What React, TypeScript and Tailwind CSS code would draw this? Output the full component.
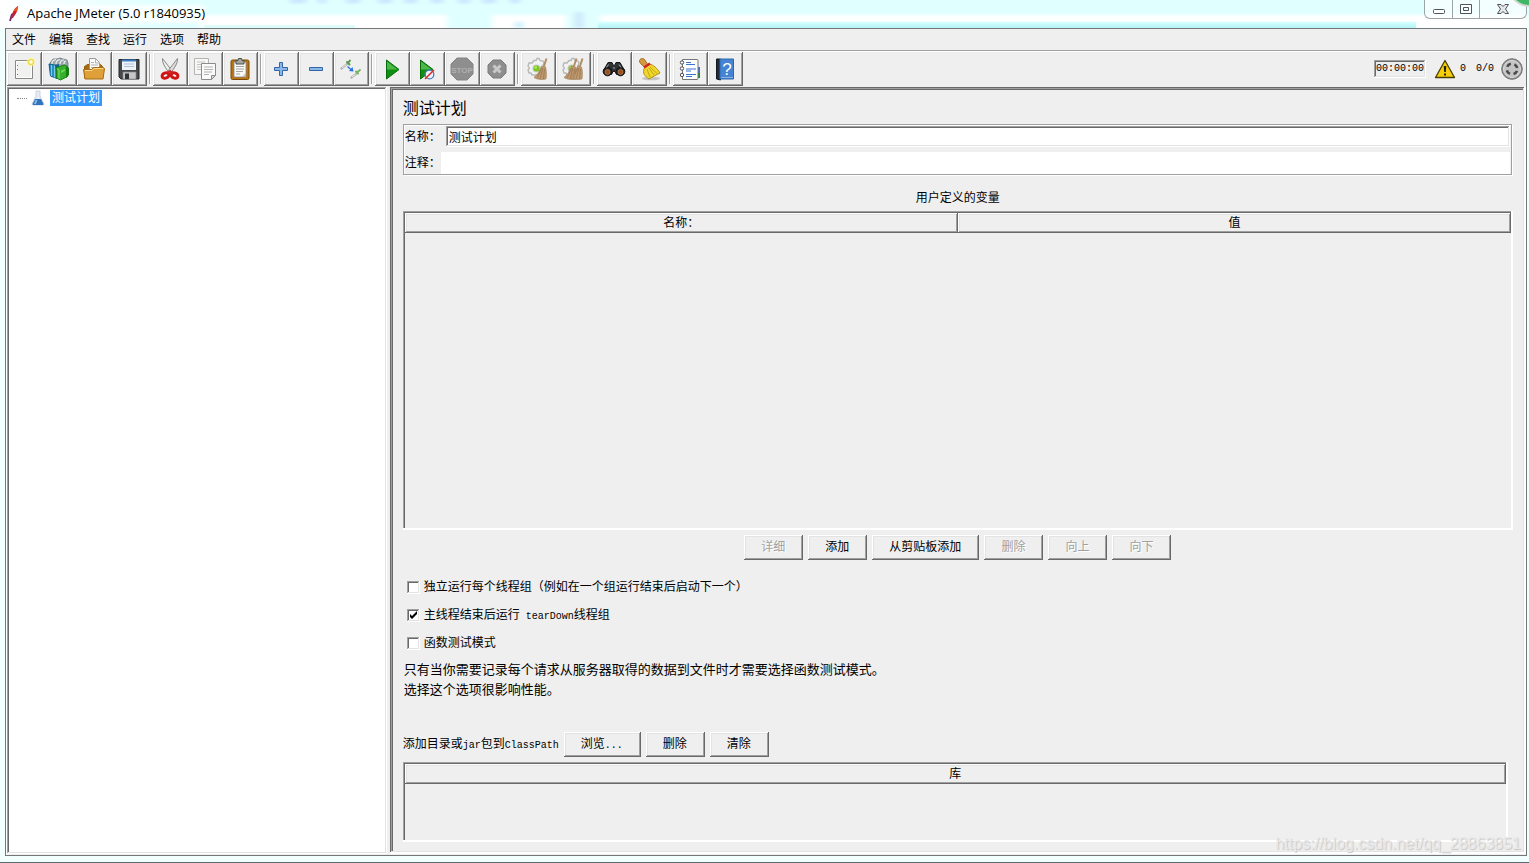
import React, { useState } from "react";

const RAISED =
  "shadow-[inset_-1px_-1px_0_#696969,inset_1px_1px_0_#ffffff,inset_-2px_-2px_0_#a0a0a0,inset_2px_2px_0_#e3e3e3]";
const SUNKEN =
  "shadow-[inset_-1px_-1px_0_#ffffff,inset_1px_1px_0_#a0a0a0,inset_-2px_-2px_0_#e3e3e3,inset_2px_2px_0_#696969]";
const WELL = "shadow-[inset_-2px_-2px_0_#ffffff,inset_1px_1px_0_#a0a0a0,inset_2px_2px_0_#696969]";
const PANE =
  "shadow-[inset_-2px_-2px_0_#ffffff,inset_1px_1px_0_#696969,inset_-3px_-3px_0_#e3e3e3,inset_2px_2px_0_#a0a0a0,inset_3px_3px_0_#696969]";
const MONO = "font-['Liberation_Mono','Noto_Sans_CJK_SC',monospace] text-[10px]";

function Svg({ children, size = 24 }: { children: React.ReactNode; size?: number }) {
  return (
    <svg width={size} height={size} viewBox="0 0 24 24" fill="none" aria-hidden="true">
      {children}
    </svg>
  );
}

const NewIcon = () => (
  <Svg>
    <path d="M3.5 3.5h17v18h-17z" fill="#f1f1ef" stroke="#888a85" />
    <path d="M4.500 4.500h15v16h-15z" stroke="#fff" />
    <path d="M5.500 8v1M5.500 12v1M5.500 17v1" stroke="#777" />
    <circle cx="19" cy="5" r="4.500" fill="#fdf6a0" opacity=".6" />
    <circle cx="19" cy="5" r="2.500" fill="#fffef0" stroke="#f0dc50" strokeWidth="1.500" />
  </Svg>
);

const TemplatesIcon = () => (
  <Svg>
    <path d="M3 6l3-4 4 0 3-1 3 1 4 1 1 3v5H3z" fill="#9aa5aa" stroke="#6d7a80" strokeWidth=".8" />
    <path d="M5 7q0-4 4-4.500M9 7q0-4 4-4.500M13 7q0-4 4-4M17 7q0-3 2-3" stroke="#eef2f3" strokeWidth="1.200" />
    <path d="M2 7l8 1.500v13L3.500 19z" fill="#1b86bf" stroke="#0b6090" />
    <path d="M4.500 8v11M7.500 8.500v12" stroke="#7cc6e6" strokeWidth="1.300" />
    <path d="M8 8l4-1v13l-2 2z" fill="#0f5f92" />
    <path d="M9.500 10.500l8-2.500 3 1.500v10l-7 3.500-4-2z" fill="#35b02c" stroke="#198215" />
    <path d="M19 9l3 2v7l-3 3z" fill="#14800f" />
    <path d="M10 11.500l2 1.500v8.500" stroke="#8be078" />
    <path d="M14 13.500l4-1.500v2l-4 2z" fill="#6ad655" />
  </Svg>
);

const OpenIcon = () => (
  <Svg>
    <path d="M2.500 9.500l3-2h13l2 2V21h-18z" fill="#a66a12" stroke="#8f5902" />
    <path d="M7.500 1.500h6l4 4v8h-10z" fill="#fafafa" stroke="#999" />
    <path d="M13.500 2v4h4M9 5.500h3M9 8h7M9 10.500h7" stroke="#aaa" strokeWidth=".9" />
    <path d="M1.500 12.500h8l2-2h10l1 1-1.500 10.500H3z" fill="#dfa03a" stroke="#a86a10" />
    <path d="M3 13.500h7l2-2h9" stroke="#fbd88c" />
  </Svg>
);

const SaveIcon = () => (
  <Svg>
    <path d="M2 2.500h20v19.500H4l-2-2z" fill="#45484a" stroke="#26292a" />
    <path d="M5 3h14v10H5z" fill="#eef3f9" />
    <path d="M5 2.500h14v2H5z" fill="#3e7cc4" />
    <path d="M7 7h10M7 9.500h10" stroke="#a9bfd7" />
    <path d="M6 15h13v7H6z" fill="#c6c8c7" stroke="#85898a" strokeWidth=".7" />
    <path d="M8 16.500h4V22H8z" fill="#303436" />
  </Svg>
);

const CutIcon = () => (
  <Svg>
    <path d="M4.500 1.500L14.500 14.500l-2.500 2C8 12 4 6 4.500 1.500z" fill="#f0f0ee" stroke="#888" />
    <path d="M19.500 1.500L9.500 14.500l2.500 2C16 12 20 6 19.500 1.500z" fill="#dcdcda" stroke="#888" />
    <ellipse cx="7.500" cy="18.500" rx="3.500" ry="2.600" stroke="#cf1212" strokeWidth="3" transform="rotate(-20 7.500 18.500)" />
    <ellipse cx="16.500" cy="18.500" rx="3.500" ry="2.600" stroke="#cf1212" strokeWidth="3" transform="rotate(20 16.500 18.500)" />
    <path d="M9.500 16l2.500-2 2.500 2" stroke="#d81c1c" strokeWidth="2" />
  </Svg>
);

const CopyIcon = () => (
  <Svg>
    <path d="M1.500 1.500h14v16h-14z" fill="#f7f7f6" stroke="#b4b5b2" />
    <path d="M4 5h8M4 7.500h4M4 10h4M4 12.500h4" stroke="#c3c4c1" />
    <path d="M8.500 6.500h14v12l-4 4h-10z" fill="#fafafa" stroke="#8b8d89" />
    <path d="M11 10h9M11 12.500h9M11 15h8M11 17.500h5" stroke="#b2b3b0" />
    <path d="M18.500 22.500v-4h4z" fill="#d4d5d2" stroke="#8b8d89" />
  </Svg>
);

const PasteIcon = () => (
  <Svg>
    <rect x="3" y="3" width="18" height="19.500" rx="1.500" fill="#b87414" stroke="#7a4a05" />
    <path d="M6 5h12v15H6z" fill="#f9f9f8" stroke="#87888a" strokeWidth=".8" />
    <path d="M8 9.500h8M8 12h8M8 14.500h7M8 17h4" stroke="#a3a5a2" />
    <path d="M8 3.500h2l.500-2h3l.500 2h2V7H8z" fill="#a4a69f" stroke="#4d504b" />
    <path d="M14 20l4-4v4z" fill="#b9bab7" />
  </Svg>
);

const PlusIcon = () => (
  <Svg>
    <path d="M10.500 5.500h3v5h5v3h-5v5h-3v-5h-5v-3h5z" fill="#8ab6e8" stroke="#3465a4" />
  </Svg>
);

const MinusIcon = () => (
  <Svg>
    <path d="M5.500 10.500h13v3h-13z" fill="#8ab6e8" stroke="#3465a4" />
  </Svg>
);

const ToggleIcon = () => (
  <Svg>
    <path d="M2.500 11.500L8 7" stroke="#a7aea4" strokeWidth="2.200" strokeLinecap="round" />
    <path d="M3 11l4.500-3.700" stroke="#f4f8f2" strokeWidth=".9" />
    <path d="M8 5l2.500 2.500M9 6l2-2.500" stroke="#5b9a50" strokeWidth="2" strokeLinecap="round" />
    <path d="M12.500 20.500l4.500-3.500" stroke="#a7aea4" strokeWidth="2.200" strokeLinecap="round" />
    <path d="M13 20l3.500-2.700" stroke="#f4f8f2" strokeWidth=".9" />
    <path d="M17 14.500l2 2M18.500 15l2.500-2" stroke="#7cb268" strokeWidth="2" strokeLinecap="round" />
    <path d="M8.500 9.500l4 3.500" stroke="#2472e8" strokeWidth="1.300" />
    <path d="M14.500 14.500l-4.500-.5 3.500-4z" fill="#2472e8" />
  </Svg>
);

const PlayIcon = () => (
  <Svg>
    <path d="M6.500 3l12.500 9.500L6.500 22z" fill="#0f8f10" stroke="#0a6b0a" />
    <path d="M7 4.500L17.500 12.500H7z" fill="#4cb848" />
  </Svg>
);

const PlayNoTimersIcon = () => (
  <Svg>
    <path d="M5.500 3L18 12.500 5.500 22z" fill="#0f8f10" stroke="#0a6b0a" />
    <path d="M6 4.500L16.500 12.500H6z" fill="#4cb848" />
    <circle cx="14.500" cy="17.500" r="4.300" fill="#eef3fb" stroke="#477cc0" strokeWidth="1.300" />
    <path d="M10 22l9-9" stroke="#e32020" strokeWidth="1.500" />
  </Svg>
);

const StopIcon = () => (
  <Svg>
    <path d="M7 1h10l6 6v10l-6 6H7l-6-6V7z" fill="#8e8e8e" stroke="#848484" />
    <text x="12" y="15.500" textAnchor="middle" fontSize="8" fontWeight="700" fill="#b0b0b0" fontFamily="Liberation Sans, sans-serif">
      STOP
    </text>
  </Svg>
);

const ShutdownIcon = () => (
  <Svg>
    <path d="M8 3h8l5 5v8l-5 5H8l-5-5V8z" fill="#8e8e8e" stroke="#7b7b7b" />
    <path d="M8.500 8.500l7 7M15.500 8.500l-7 7" stroke="#c9c9c9" strokeWidth="3" />
  </Svg>
);

const Broom = ({ x = 0 }: { x?: number }) => (
  <g transform={`translate(${x} 0)`}>
    <path d="M20.500 1.500L18 9" stroke="#b18d66" strokeWidth="2" />
    <path d="M15.500 9l4 1c1 4 1 8 .5 12-4 .8-9 .5-12-1.500 4-3 6-7 7.500-11.500z" fill="#c09a70" stroke="#a07c55" strokeWidth=".7" />
    <path d="M16 11l-5 10M17 11l-3 11M18.500 12l-1 10" stroke="#94704a" strokeWidth=".7" />
  </g>
);

const Gear = () => (
  <>
    <path
      d="M8 3.500l2 0 1-2h2l1 2 3 .5 1 2-1 2 2 2v5l-2 1-1 2H6l-1-2-2 0-1-3 1.500-1.500L2 9l1-3h3z"
      fill="#f2f2f2"
      stroke="#b5b7b5"
      strokeWidth="1.300"
    />
    <circle cx="10.500" cy="11.500" r="4" fill="#c9c9c9" />
    <circle cx="10.500" cy="11.500" r="3" fill="#7cc81e" />
    <circle cx="9.800" cy="10.500" r="1.200" fill="#b4e86e" />
  </>
);

const ClearIcon = () => (
  <Svg>
    <Gear />
    <Broom />
  </Svg>
);

const ClearAllIcon = () => (
  <Svg>
    <Gear />
    <Broom x={-5} />
    <Broom x={1} />
  </Svg>
);

const SearchIcon = () => (
  <Svg>
    <path d="M6 5.500h4l1.500 3h1l1.500-3h4l4.500 8-3 4h-5l-1.500-3h-2l-1.500 3h-5l-3-4z" fill="#303435" stroke="#151717" />
    <circle cx="5.500" cy="14.500" r="4.300" fill="#252525" stroke="#111" />
    <circle cx="18.500" cy="14.500" r="4.300" fill="#252525" stroke="#111" />
    <circle cx="5.500" cy="15" r="2.500" fill="#9c4f1d" stroke="#c98b62" strokeWidth=".6" />
    <circle cx="18.500" cy="15" r="2.500" fill="#9c4f1d" stroke="#c98b62" strokeWidth=".6" />
    <path d="M6.500 7.500l-2 3M17 7.500l2 3M11 11h2" stroke="#a3a7a7" />
  </Svg>
);

const SweepIcon = () => (
  <Svg>
    <ellipse cx="14" cy="21.500" rx="9" ry="1.800" fill="#999" opacity=".5" />
    <path d="M2.500 4c0-2 3-3.500 5-1.500L11 8l-3 2.500-4-3.500c-1-1-1.500-2-1.500-3z" fill="#d59a41" stroke="#8f5902" strokeWidth=".8" />
    <path d="M7.500 10.500L12.500 7c4 1 7.500 4 10.500 9-3 1.500-7 3.500-11 6C8 19 5 17 7.500 10.500z" fill="#f0d72c" stroke="#a98708" strokeWidth=".9" />
    <path d="M10 12l3 8M12 11l5 7M13 10l7 6.500" stroke="#b89a13" strokeWidth=".8" />
    <path d="M7 10.500l6-4" stroke="#d42020" strokeWidth="2.500" />
  </Svg>
);

const FunctionsIcon = () => (
  <Svg>
    <path d="M19 10h3v6h-3z" fill="#2d78df" />
    <path d="M19 16h3v5h-3z" fill="#159415" />
    <path d="M4.500 2.500h14.500a1 1 0 011 1v18a1 1 0 01-1 1H4.500z" fill="#fff" stroke="#777" />
    <path d="M8 5.500h5M8 7.500h9M8 12h10M8 14h5M8 17.500h10M8 19.500h6" stroke="#3a76cc" strokeWidth="1.200" />
    <g stroke="#4e4e4e" fill="#fff">
      <circle cx="4" cy="5.500" r="1.700" />
      <circle cx="4" cy="11.500" r="1.700" />
      <circle cx="4" cy="18" r="1.700" />
    </g>
  </Svg>
);

const HelpIcon = () => (
  <Svg>
    <path d="M3.500 2h4v21l-4-1z" fill="#222c38" stroke="#101820" />
    <path d="M7 2h13.500v20H7z" fill="#4484d2" stroke="#2f66ad" />
    <path d="M8 20.500h12" stroke="#8bb4e6" />
    <text x="14" y="17.500" textAnchor="middle" fontSize="17" fill="#fff" fontFamily="Liberation Sans, sans-serif">
      ?
    </text>
  </Svg>
);

type Tool = { label: string; Icon: () => React.ReactElement; disabled?: boolean };

const TOOL_GROUPS: Tool[][] = [
  [
    { label: "新建", Icon: NewIcon },
    { label: "模板", Icon: TemplatesIcon },
    { label: "打开", Icon: OpenIcon },
    { label: "保存", Icon: SaveIcon },
  ],
  [
    { label: "剪切", Icon: CutIcon },
    { label: "复制", Icon: CopyIcon },
    { label: "粘贴", Icon: PasteIcon },
  ],
  [
    { label: "展开", Icon: PlusIcon },
    { label: "收起", Icon: MinusIcon },
    { label: "切换", Icon: ToggleIcon },
  ],
  [
    { label: "启动", Icon: PlayIcon },
    { label: "不停顿启动", Icon: PlayNoTimersIcon },
    { label: "停止", Icon: StopIcon, disabled: true },
    { label: "关闭", Icon: ShutdownIcon, disabled: true },
  ],
  [
    { label: "清除", Icon: ClearIcon },
    { label: "清除全部", Icon: ClearAllIcon },
  ],
  [
    { label: "搜索", Icon: SearchIcon },
    { label: "重置搜索", Icon: SweepIcon },
  ],
  [
    { label: "函数助手", Icon: FunctionsIcon },
    { label: "帮助", Icon: HelpIcon },
  ],
];

function PushButton({ children, disabled }: { children: React.ReactNode; disabled?: boolean }) {
  return (
    <button
      type="button"
      disabled={disabled}
      className={`h-[25px] pr-[18px] pl-[17px] leading-[25px] whitespace-nowrap disabled:text-[#a0a0a0] disabled:[text-shadow:1px_1px_0_#fff] ${RAISED}`}
    >
      {children}
    </button>
  );
}

function CheckRow({ children, initial = false }: { children: React.ReactNode; initial?: boolean }) {
  const [on, setOn] = useState(initial);
  return (
    <label className="flex h-7 items-center gap-1">
      <span className="relative block size-[13px]">
        <input
          type="checkbox"
          checked={on}
          onChange={(e) => setOn(e.target.checked)}
          className={`peer block size-[13px] appearance-none bg-white ${SUNKEN}`}
        />
        <svg
          className="pointer-events-none absolute inset-0 hidden peer-checked:block"
          width="13"
          height="13"
          viewBox="0 0 13 13"
          fill="none"
          aria-hidden="true"
        >
          <path d="M3 5v3l2 2 5-5V2L5 7z" fill="#000" />
        </svg>
      </span>
      <span>{children}</span>
    </label>
  );
}

function HeaderTable({ columns, className }: { columns: string[]; className: string }) {
  return (
    <div className={`p-0.5 ${WELL} ${className}`}>
      <table className="w-full table-fixed border-collapse">
        <thead>
          <tr>
            {columns.map((c) => (
              <th key={c} scope="col" className={`h-5 p-0 text-center font-normal ${RAISED}`}>
                {c}
              </th>
            ))}
          </tr>
        </thead>
        <tbody />
      </table>
    </div>
  );
}

function TitleBar() {
  return (
    <header className="relative flex h-7 items-center">
      <svg className="absolute inset-0 size-full" viewBox="0 0 1529 28" preserveAspectRatio="none" aria-hidden="true">
        <defs>
          <filter id="soft" x="-10%" y="-50%" width="120%" height="200%">
            <feGaussianBlur stdDeviation="3 1.500" />
          </filter>
          <linearGradient id="teal" x1="0" y1="0" x2="0" y2="1">
            <stop offset="0" stopColor="#d8ffff" />
            <stop offset="1" stopColor="#b4f3f6" />
          </linearGradient>
          <linearGradient id="edge" x1="0" y1="0" x2="1" y2="0">
            <stop offset="0" stopColor="#ffffff" />
            <stop offset="1" stopColor="#ffffff" stopOpacity="0" />
          </linearGradient>
        </defs>
        <rect width="1529" height="28" fill="#e0ffff" />
        <g filter="url(#soft)">
          <rect x="20" y="5" width="184" height="18" fill="#fff" opacity=".8" />
          <rect x="200" y="15" width="247" height="16" fill="#fff" />
          <rect x="492" y="15" width="74" height="16" fill="#fff" />
          <rect x="600" y="15" width="929" height="7" fill="#fff" />
          <rect x="1415" y="17" width="114" height="12" fill="#fff" />
          <path
            d="M290 1h16M318 1h8M346 1h14M378 1h14M404 1h13M431 1h12M458 1h12M482 1h14M510 1h10"
            stroke="#c8e2ff"
            strokeWidth="4"
          />
          <rect x="515" y="22" width="8" height="6" fill="#c8f0fb" />
          <rect x="575" y="12" width="8" height="16" fill="#cde6fb" />
        </g>
        <rect x="598" y="22" width="818" height="6" fill="url(#teal)" />
        <rect x="204" y="25" width="151" height="3" fill="#ddfcfa" />
        <rect width="160" height="28" fill="url(#edge)" />
      </svg>
      <div className="relative flex items-center gap-1.5 pl-1.5 font-['Open_Sans','Noto_Sans',sans-serif] text-[13px]">
        <svg width="15" height="20" viewBox="0 0 15 20" aria-hidden="true">
          <path d="M12 2c-2 1-5 4-6 9l-1 3 2-1c3-2 5-7 5-11z" fill="#d22128" />
          <path d="M6 10l-2 7" stroke="#6d2a6e" strokeWidth="1.800" />
          <path d="M6 9l-2 6 3-1 2-4z" fill="#a52a50" />
          <path d="M12 2c-2 1-3 3-4 5l3 0c1-2 1-4 1-5z" fill="#ea5a25" />
        </svg>
        <h1>Apache JMeter (5.0 r1840935)</h1>
      </div>
      <div className="relative mr-0.5 ml-auto flex h-[19px] self-start overflow-hidden rounded-b-md border border-t-0 border-[#9aa5a8] bg-white/60">
        <button type="button" aria-label="最小化" className="grid w-7 place-items-center border-r border-[#9aa5a8]">
          <svg width="14" height="18" viewBox="0 0 14 18" aria-hidden="true">
            <rect x="1.500" y="9.500" width="11" height="4" rx="1" fill="#fff" stroke="#4d5560" />
          </svg>
        </button>
        <button type="button" aria-label="最大化" className="grid w-[27px] place-items-center border-r border-[#9aa5a8]">
          <svg width="14" height="18" viewBox="0 0 14 18" aria-hidden="true">
            <path d="M1.500 4.500h11v9h-11zM4.500 7.500v3h5v-3z" fill="#fff" fillRule="evenodd" stroke="#4d5560" />
          </svg>
        </button>
        <button type="button" aria-label="关闭窗口" className="grid w-[46px] place-items-center">
          <svg width="14" height="18" viewBox="0 0 14 18" aria-hidden="true">
            <path d="M1.500 4.500H5l2 2 2-2h3.500L9.500 9l3 4.500H9l-2-2-2 2H1.500l3-4.500z" fill="#e4e6e8" stroke="#4d5560" />
          </svg>
        </button>
      </div>
      <svg className="absolute top-0 right-0" width="20" height="8" viewBox="0 0 20 8" aria-hidden="true">
        <circle cx="20" cy="-14" r="21" fill="#cfd8d3" />
        <circle cx="20" cy="-14" r="19" fill="#3cb864" />
      </svg>
    </header>
  );
}

function Toolbar() {
  return (
    <div className="flex h-9 items-center border-t border-white pr-[3px] pb-px pl-px">
      {TOOL_GROUPS.map((group, i) => (
        <React.Fragment key={i}>
          {i > 0 && <span className="mx-0.5 h-[30px] w-0.5 border-r border-l border-r-white border-l-[#a0a0a0]" />}
          {group.map(({ label, Icon, disabled }) => (
            <button
              key={label}
              type="button"
              aria-label={label}
              disabled={disabled}
              className={`grid h-[34px] w-[35px] shrink-0 place-items-center pr-px ${RAISED}`}
            >
              <Icon />
            </button>
          ))}
        </React.Fragment>
      ))}
      <div className={`ml-auto flex items-center whitespace-nowrap ${MONO}`}>
        <output className={`px-0.5 leading-[18px] ${SUNKEN}`}>00:00:00</output>
        <svg className="mr-1 ml-2" width="22" height="20" viewBox="0 0 22 20" aria-hidden="true">
          <path d="M11 1.500l9.500 17h-19z" fill="#f7cf08" stroke="#4a3f00" strokeWidth="1.300" strokeLinejoin="round" />
          <path d="M9.700 7h2.600l-.500 6h-1.600zM10 14.500h2v2h-2z" fill="#222" />
        </svg>
        <span>0</span>
        <span className="ml-2.5">0/0</span>
        <svg className="ml-[7px]" width="22" height="22" viewBox="0 0 22 22" fill="none" aria-hidden="true">
          <circle cx="11" cy="11" r="10.300" fill="#8e8e8e" stroke="#747474" />
          <circle cx="11" cy="11" r="8.500" fill="#c4c4c4" stroke="#dedede" />
          <circle cx="11" cy="11" r="5.300" stroke="#4a4a4a" strokeWidth="2.600" strokeDasharray="4.600 3.725" strokeDashoffset="-1.900" />
        </svg>
      </div>
    </div>
  );
}

export default function App() {
  const [name, setName] = useState("测试计划");
  const [comment, setComment] = useState("");
  return (
    <div className="relative flex min-h-screen flex-col border-b border-[#5a6a72] bg-[#f2ffff] font-['Liberation_Sans','Noto_Sans_CJK_SC',sans-serif] text-xs text-black">
      <TitleBar />
      <div className="mr-0.5 mb-1.5 ml-[5px] flex flex-1 flex-col border border-[#747779] bg-[#efefef]">
        <nav className="flex h-[22px] items-center gap-[13px] border-b border-[#a0a0a0] pl-1.5">
          {["文件", "编辑", "查找", "运行", "选项", "帮助"].map((m) => (
            <button key={m} type="button">
              {m}
            </button>
          ))}
        </nav>
        <Toolbar />
        <div className="flex flex-1 gap-[3px] border-l border-white pb-px">
          <aside className={`w-1/4 bg-white p-[3px] ${SUNKEN}`}>
            <ul className="pl-[7px]">
              <li className="flex h-4 items-center">
                <span className="w-2.5 border-t border-dotted border-[#888]" />
                <svg className="mx-1 shrink-0" width="14" height="16" viewBox="0 0 14 16" aria-hidden="true">
                  <path d="M5 1h4v5l4 8q0 1-1 1H2q-1 0-1-1l4-8z" fill="#e7edf5" stroke="#c1cad4" strokeWidth=".8" />
                  <path d="M4 9h6l2.500 5q0 1-1 1h-9q-1 0-1-1z" fill="#2f74bd" />
                  <path d="M4.500 10h2L5 14H3z" fill="#86b8e8" />
                </svg>
                <span className="ml-px bg-[#3399ff] px-0.5 leading-4 text-white">测试计划</span>
              </li>
            </ul>
          </aside>
          <main className={`flex min-w-0 flex-1 flex-col px-[13px] pt-2.5 pb-3 ${PANE}`}>
            <h2 className="text-base leading-6">测试计划</h2>
            <div className="mt-[3px] mr-px flex flex-col gap-[5px] border border-[#a0a0a0] px-px pt-px shadow-[1px_1px_0_#fff,inset_1px_1px_0_#fff]">
              <div className="flex items-center">
                <label htmlFor="plan-name" className="w-[41px] shrink-0">
                  名称：
                </label>
                <input
                  id="plan-name"
                  value={name}
                  onChange={(e) => setName(e.target.value)}
                  className={`h-[21px] min-w-0 flex-1 bg-white px-[3px] pb-px outline-none ${SUNKEN}`}
                />
              </div>
              <div className="flex items-center">
                <label htmlFor="plan-comment" className="w-9 shrink-0">
                  注释：
                </label>
                <input
                  id="plan-comment"
                  value={comment}
                  onChange={(e) => setComment(e.target.value)}
                  className="h-[22px] min-w-0 flex-1 bg-white px-[3px] outline-none"
                />
              </div>
            </div>
            <h3 className="mt-[13px] mb-[3px] text-center leading-5">用户定义的变量</h3>
            <HeaderTable columns={["名称：", "值"]} className="min-h-24 flex-1" />
            <div className="mt-[5px] flex justify-center gap-[5px]">
              <PushButton disabled>详细</PushButton>
              <PushButton>添加</PushButton>
              <PushButton>从剪贴板添加</PushButton>
              <PushButton disabled>删除</PushButton>
              <PushButton disabled>向上</PushButton>
              <PushButton disabled>向下</PushButton>
            </div>
            <div className="mt-[13px] pl-1">
              <CheckRow>独立运行每个线程组（例如在一个组运行结束后启动下一个）</CheckRow>
              <CheckRow initial>
                主线程结束后运行<span className={`${MONO} whitespace-pre`}> tearDown</span>线程组
              </CheckRow>
              <CheckRow>函数测试模式</CheckRow>
            </div>
            <p className="mt-[3px] pl-px text-[13px] leading-5">
              只有当你需要记录每个请求从服务器取得的数据到文件时才需要选择函数测试模式。
              <br />
              选择这个选项很影响性能。
            </p>
            <div className="mt-8 flex items-center gap-[5px]">
              <span>
                添加目录或<span className={MONO}>jar</span>包到<span className={MONO}>ClassPath</span>
              </span>
              <PushButton>
                浏览<span className={MONO}>...</span>
              </PushButton>
              <PushButton>删除</PushButton>
              <PushButton>清除</PushButton>
            </div>
            <HeaderTable columns={["库"]} className="mt-[5px] mr-[5px] h-20" />
          </main>
        </div>
      </div>
      <div className="pointer-events-none absolute right-2 bottom-2 text-base leading-5 text-[#e9e9e9] [text-shadow:1px_1px_1px_#c4c4c4]">
        https://blog.csdn.net/qq_28863851
      </div>
    </div>
  );
}
